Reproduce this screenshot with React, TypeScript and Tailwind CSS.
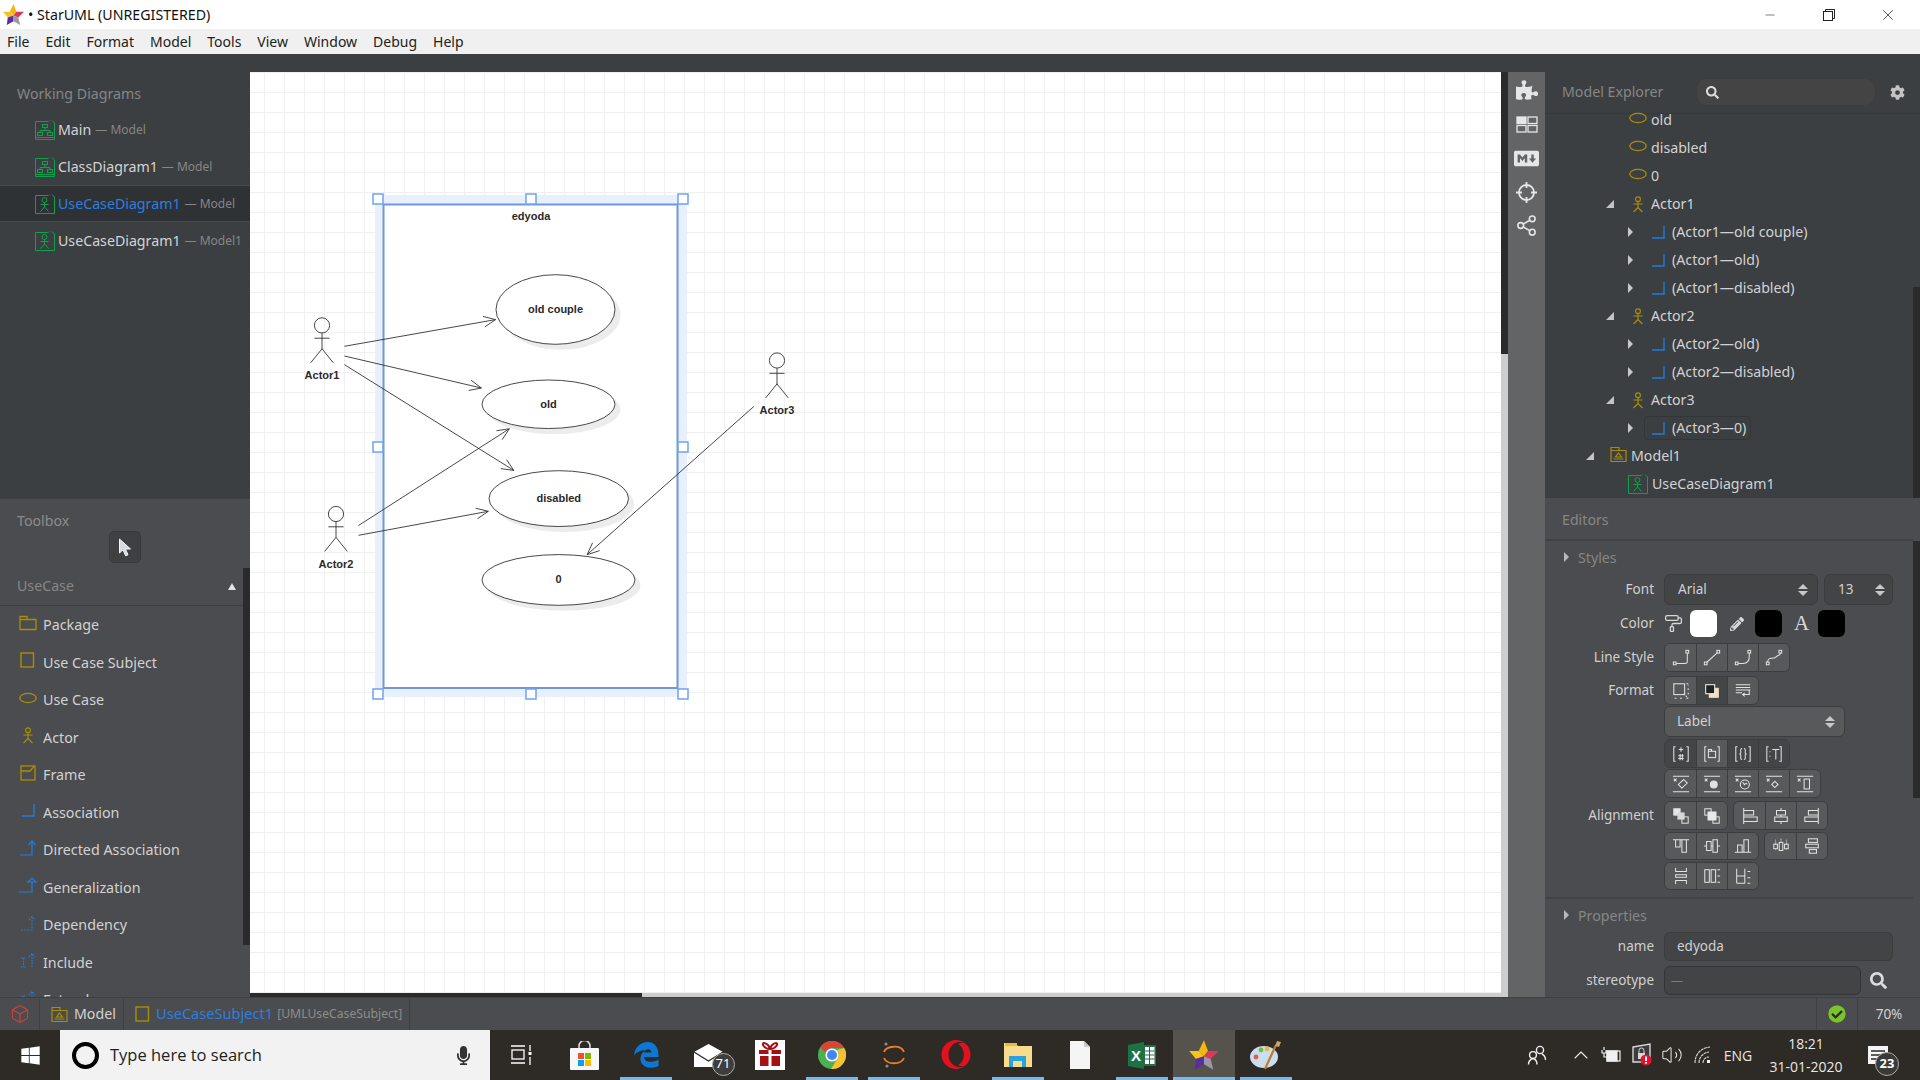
import React from 'react';
import { Box, Share2, Minus, X, ChevronUp, Volume2, PaintRoller } from 'lucide-react';
import { FaPuzzlePiece, FaMarkdown, FaSearch, FaCog, FaPencilAlt, FaWindows, FaOpera, FaMicrophone, FaCheckCircle } from 'react-icons/fa';

const YELLOW = '#a98e05';
const BLUE = '#1f7fdd';
const GREEN = '#0fa04d';

const Star = ({ size = 24 }: { size?: number }) => (
  <svg width={size} height={size} viewBox="0 0 24 24">
    <polygon points="12,1 15,9 12,13 8,9" fill="#f5b60f" />
    <polygon points="1,9 8,9 12,13 6,15" fill="#f7c51a" />
    <polygon points="15,9 23,9 17,15 12,13" fill="#d83a5a" />
    <polygon points="6,15 12,13 12,19 5,23" fill="#5a2ea0" />
    <polygon points="12,13 17,15 19,23 12,19" fill="#9a98a6" />
  </svg>
);

const DiagramIcon = ({ kind }: { kind: 'tree' | 'actor' }) => (
  <svg width="20" height="20" viewBox="0 0 20 20" fill="none" stroke={GREEN} strokeWidth="1">
    <path d="M15 .5h-.5M.5 1.5h13M.5 1.5v18h19V3M17 .5l2.5 2.5" />
    {kind === 'tree' ? (
      <>
        <rect x="7.5" y="4.5" width="5" height="3" />
        <rect x="2.5" y="12.5" width="5" height="3" />
        <rect x="12.5" y="12.5" width="5" height="3" />
        <path d="M10 7.5v3M5 12.5v-2h10v2M1 17.5h18" />
      </>
    ) : (
      <>
        <circle cx="9.5" cy="6" r="2.5" />
        <path d="M9.5 8.5v4.5M5.5 10.5h8M9.5 13l-4 4.5M9.500 13l4 4.5" />
      </>
    )}
  </svg>
);

const PackageIcon = () => (
  <svg width="18" height="16" viewBox="0 0 18 16" fill="none" stroke={YELLOW} strokeWidth="1.3">
    <path d="M1 14.5V1.5h7v3M1 4.500h16v10H1z" />
  </svg>
);
const ModelIcon = () => (
  <svg width="17" height="17" viewBox="0 0 17 17" fill="none" stroke={YELLOW} strokeWidth="1.2">
    <path d="M1 15.500V1.500h8v3M1 4.500h15v11H1z" />
    <path d="M8.500 7l3 4h-6zM3.500 13h10" />
  </svg>
);
const SubjectIcon = () => (
  <svg width="15" height="16" viewBox="0 0 15 16" fill="none" stroke={YELLOW} strokeWidth="1.4">
    <rect x="1" y="1" width="12.5" height="14" />
  </svg>
);
const EllipseIcon = () => (
  <svg width="18" height="12" viewBox="0 0 18 12" fill="none" stroke={YELLOW} strokeWidth="1.3">
    <ellipse cx="9" cy="6" rx="8.2" ry="4.6" />
  </svg>
);
const ActorIcon = () => (
  <svg width="14" height="17" viewBox="0 0 14 17" fill="none" stroke={YELLOW} strokeWidth="1.2">
    <circle cx="7" cy="3.2" r="2.4" />
    <path d="M7 5.500v6M2.500 8h9M7 11.500L2.500 16M7 11.500l4.500 4.500" />
  </svg>
);
const FrameIcon = () => (
  <svg width="16" height="16" viewBox="0 0 16 16" fill="none" stroke={YELLOW} strokeWidth="1.3">
    <rect x="1" y="1" width="14" height="14" />
    <path d="M1 6h9l4-4.500" />
  </svg>
);
const AssocIcon = () => (
  <svg width="14" height="14" viewBox="0 0 14 14" fill="none" stroke={BLUE} strokeWidth="1.3">
    <path d="M1 13h12V1" />
  </svg>
);
const LinkIcon = ({ kind }: { kind: 'directed' | 'gen' | 'dep' | 'include' | 'extend' }) => (
  <svg width="20" height="18" viewBox="0 0 20 18" fill="none" stroke={BLUE} strokeWidth="1.2">
    {kind === 'directed' && <path d="M2 16h12V2M10.500 6L14 2l3.500 4" />}
    {kind === 'gen' && <path d="M1 16h13V6M10 6l4-4 4 4z" />}
    {kind === 'dep' && <path d="M3 16h11V3M11 6l3-3.500L17 6" strokeDasharray="1.6 1.6" />}
    {kind === 'include' && <path d="M3 7h5M3 16h5M5.500 7v9M14 16V3M11 6l3-3.500L17 6" strokeDasharray="1.6 1.2" />}
    {kind === 'extend' && <path d="M3 7h5M3 16h5M5.500 7v9M14 16V3M11 6l3-3.500L17 6" strokeDasharray="1.6 1.2" />}
  </svg>
);

const workingDiagrams = [
  { name: 'Main', owner: 'Model', kind: 'tree' as const },
  { name: 'ClassDiagram1', owner: 'Model', kind: 'tree' as const },
  { name: 'UseCaseDiagram1', owner: 'Model', kind: 'actor' as const, active: true },
  { name: 'UseCaseDiagram1', owner: 'Model1', kind: 'actor' as const },
];

const tools = [
  { label: 'Package', icon: <PackageIcon /> },
  { label: 'Use Case Subject', icon: <SubjectIcon /> },
  { label: 'Use Case', icon: <EllipseIcon /> },
  { label: 'Actor', icon: <ActorIcon /> },
  { label: 'Frame', icon: <FrameIcon /> },
  { label: 'Association', icon: <AssocIcon /> },
  { label: 'Directed Association', icon: <LinkIcon kind="directed" /> },
  { label: 'Generalization', icon: <LinkIcon kind="gen" /> },
  { label: 'Dependency', icon: <LinkIcon kind="dep" /> },
  { label: 'Include', icon: <LinkIcon kind="include" /> },
  { label: 'Extend', icon: <LinkIcon kind="extend" /> },
];

function LeftPanel() {
  return (
    <div className="w-[250px] shrink-0 flex flex-col">
      <div className="h-[444px] bg-[#3b3f42] pt-[26px]">
        <div className="pl-[17px] h-[28px] leading-[28px] text-[14.2px] text-[#868686]">Working Diagrams</div>
        <div className="mt-[3px]">
          {workingDiagrams.map((d, i) => (
            <div
              key={i}
              className={`h-[37px] flex items-center pl-[35px] border-y ${d.active ? 'bg-[#2f3234] border-[#45484b]' : 'border-transparent'}`}
            >
              <DiagramIcon kind={d.kind} />
              <span className={`ml-[3px] text-[14.2px] ${d.active ? 'text-[#2a7fe0]' : 'text-[#d4d4d4]'}`}>{d.name}</span>
              <span className="ml-[4px] text-[12px] text-[#868686]">— {d.owner}</span>
            </div>
          ))}
        </div>
      </div>
      <div className="relative flex-1 min-h-0 overflow-hidden bg-[#4b4c4f] border-t border-[#3d3f41]">
        <div className="pl-[17px] pt-[12px] h-[32px] text-[14.2px] leading-[20px] text-[#8b8b8b]">Toolbox</div>
        <div className="pl-[109px]">
          <div className="w-[32px] h-[32px] rounded-[5px] bg-[#3e4042] border border-[#38393b] flex items-center justify-center">
            <svg width="15" height="19" viewBox="0 0 15 19">
              <path d="M1.500 1v14l3.500-3.200 2.600 6 2.400-1-2.500-5.800h5z" fill="#d6dbe2" stroke="#f2f4f6" strokeWidth="1" />
            </svg>
          </div>
        </div>
        <div className="mt-[4px] h-[39px] mr-[7px] pl-[17px] pr-[7px] flex items-center justify-between border-b border-[#3e3f41] text-[14.2px] text-[#878787]">
          UseCase
          <span className="w-0 h-0 border-x-[4.5px] border-x-transparent border-b-[7px] border-b-[#e2e2e2]" />
        </div>
        {tools.map((t) => (
          <div key={t.label} className="h-[37.5px] flex items-center">
            <span className="w-[43px] shrink-0 flex justify-center pl-[12px] pb-[4px]">{t.icon}</span>
            <span className="text-[14.3px] text-[#d2d2d2]">{t.label}</span>
          </div>
        ))}
        <div className="absolute right-0 top-[69px] w-[7px] h-[377px] bg-[#2b2b2b]" />
      </div>
    </div>
  );
}

const Actor = ({ x, y, label }: { x: number; y: number; label: string }) => (
  <g fill="none" stroke="#333" strokeWidth="0.9">
    <circle cx={x} cy={y} r="7.6" />
    <path d={`M${x} ${y + 7.6}v16M${x - 7.6} ${y + 12.8}h15.2M${x} ${y + 23.4}l-11.3 14M${x} ${y + 23.4}l11.3 14`} />
    <text x={x} y={y + 53.5} textAnchor="middle" stroke="none" fill="#2a2a2a" fontSize="11" fontWeight="700" fontFamily="'Liberation Sans', sans-serif">
      {label}
    </text>
  </g>
);

const UseCase = ({ x0, x1, y0, y1, label }: { x0: number; y0: number; x1: number; y1: number; label: string }) => {
  const cx = (x0 + x1) / 2;
  const cy = (y0 + y1) / 2;
  const rx = (x1 - x0) / 2;
  const ry = (y1 - y0) / 2;
  return (
    <g>
      <ellipse cx={cx + 5.5} cy={cy + 5.5} rx={rx} ry={ry} fill="#ececec" />
      <ellipse cx={cx} cy={cy} rx={rx} ry={ry} fill="#fff" stroke="#333" strokeWidth="0.9" />
      <text x={cx} y={cy + 3.5} textAnchor="middle" fill="#2a2a2a" fontSize="11" fontWeight="700" fontFamily="'Liberation Sans', sans-serif">
        {label}
      </text>
    </g>
  );
};

const Arrow = ({ x1, y1, x2, y2 }: { x1: number; y1: number; x2: number; y2: number }) => {
  const a = Math.atan2(y2 - y1, x2 - x1);
  const len = 13;
  const spread = 0.42;
  const p1 = [x2 - len * Math.cos(a - spread), y2 - len * Math.sin(a - spread)];
  const p2 = [x2 - len * Math.cos(a + spread), y2 - len * Math.sin(a + spread)];
  return (
    <path
      d={`M${x1} ${y1}L${x2} ${y2}M${p1[0]} ${p1[1]}L${x2} ${y2}L${p2[0]} ${p2[1]}`}
      fill="none"
      stroke="#333"
      strokeWidth="0.9"
    />
  );
};

const handles = [
  [378, 199], [531, 199], [683, 199],
  [378, 447], [683, 447],
  [378, 694], [531, 694], [683, 694],
];

function Diagram() {
  return (
    <svg className="absolute inset-0" width="1252" height="921" viewBox="250 72 1252 921">
      <rect x="375" y="195" width="312" height="502" fill="#e8f0fd" />
      <rect x="383.5" y="204.5" width="294" height="483.5" fill="#fff" stroke="#7098d8" strokeWidth="2" />
      <text x="531" y="220" textAnchor="middle" fill="#2a2a2a" fontSize="11" fontWeight="700" fontFamily="'Liberation Sans', sans-serif">
        edyoda
      </text>
      <UseCase x0={496} x1={615} y0={274.7} y1={344.3} label="old couple" />
      <UseCase x0={482} x1={615} y0={380} y1={428.5} label="old" />
      <UseCase x0={489} x1={628.5} y0={470.7} y1={526.5} label="disabled" />
      <UseCase x0={482} x1={635} y0={554.6} y1={605.3} label="0" />
      <Actor x={322} y={325.4} label="Actor1" />
      <Actor x={336} y={514} label="Actor2" />
      <Actor x={777} y={360.5} label="Actor3" />
      <Arrow x1={344.4} y1={346.3} x2={495.6} y2={319.6} />
      <Arrow x1={344.4} y1={356} x2={481.4} y2={388} />
      <Arrow x1={344.4} y1={364.6} x2={513.8} y2={470.4} />
      <Arrow x1={358.5} y1={525.5} x2={509.3} y2={428.8} />
      <Arrow x1={358.5} y1={535.3} x2={488.3} y2={511.3} />
      <Arrow x1={753.8} y1={406.5} x2={587.2} y2={554.6} />
      {handles.map(([x, y]) => (
        <rect key={`${x}-${y}`} x={x - 5} y={y - 5} width="10" height="10" fill="#fff" stroke="#6ea2ee" strokeWidth="1.5" />
      ))}
    </svg>
  );
}

function CanvasArea() {
  return (
    <div className="flex-1 min-w-0 flex flex-col">
      <div className="h-[18px] bg-[#3b3f42]" />
      <div className="flex-1 min-h-0 flex">
        <div className="flex-1 min-w-0 flex flex-col">
          <div className="relative flex-1 min-h-0 overflow-hidden bg-white bg-[linear-gradient(#f0f0f0_1px,transparent_1px),linear-gradient(90deg,#f0f0f0_1px,transparent_1px)] bg-[size:20px_20px] bg-[position:14px_0]">
            <Diagram />
          </div>
          <div className="h-[4px] bg-[#cdcdcd]">
            <div className="h-full w-[392px] bg-[#2b2b2b]" />
          </div>
        </div>
        <div className="w-[7px] bg-[#cdcdcd]">
          <div className="h-[282px] bg-[#2b2b2b]" />
        </div>
        <div className="w-[37px] bg-[#636466] flex flex-col items-center pt-[1px] text-[#e6e6e6]">
          <div className="h-[34px] flex items-center"><FaPuzzlePiece size={22} /></div>
          <div className="h-[34px] flex items-center">
            <svg width="22" height="17" viewBox="0 0 22 17" fill="none" stroke="currentColor" strokeWidth="1.3">
              <rect x="1" y="1" width="9" height="6.5" fill="currentColor" />
              <rect x="12" y="1" width="9" height="6.5" />
              <rect x="1" y="9.5" width="9" height="6.5" />
              <rect x="12" y="9.5" width="9" height="6.5" />
            </svg>
          </div>
          <div className="h-[34px] flex items-center"><FaMarkdown size={25} /></div>
          <div className="h-[34px] flex items-center">
            <svg width="23" height="23" viewBox="0 0 23 23" fill="none" stroke="currentColor" strokeWidth="1.8">
              <circle cx="11.5" cy="11.5" r="7.5" />
              <path d="M11.5 1v6M11.5 16v6M1 11.500h6M16 11.500h6" />
            </svg>
          </div>
          <div className="h-[33px] flex items-center"><Share2 size={23} strokeWidth={1.6} /></div>
        </div>
      </div>
    </div>
  );
}

type TreeRow = {
  label: string;
  kind: 'ellipse' | 'actor' | 'assoc' | 'model' | 'diagram';
  caret?: 'down' | 'right';
  selected?: boolean;
};

const treeRows: TreeRow[] = [
  { label: 'old', kind: 'ellipse' },
  { label: 'disabled', kind: 'ellipse' },
  { label: '0', kind: 'ellipse' },
  { label: 'Actor1', kind: 'actor', caret: 'down' },
  { label: '(Actor1—old couple)', kind: 'assoc', caret: 'right' },
  { label: '(Actor1—old)', kind: 'assoc', caret: 'right' },
  { label: '(Actor1—disabled)', kind: 'assoc', caret: 'right' },
  { label: 'Actor2', kind: 'actor', caret: 'down' },
  { label: '(Actor2—old)', kind: 'assoc', caret: 'right' },
  { label: '(Actor2—disabled)', kind: 'assoc', caret: 'right' },
  { label: 'Actor3', kind: 'actor', caret: 'down' },
  { label: '(Actor3—0)', kind: 'assoc', caret: 'right', selected: true },
  { label: 'Model1', kind: 'model', caret: 'down' },
  { label: 'UseCaseDiagram1', kind: 'diagram' },
];

const DownCaret = () => (
  <svg width="8" height="8" viewBox="0 0 8 8"><polygon points="8,0 8,8 0,8" fill="#c4c4c4" /></svg>
);
const RightCaret = () => (
  <span className="w-0 h-0 border-y-[5px] border-y-transparent border-l-[5px] border-l-[#c8c8c8]" />
);

function Explorer() {
  return (
    <div className="relative h-[444px] bg-[#3b3f42] overflow-hidden">
      <div className="h-[60px] flex items-center border-b border-[#36393b] pl-[17px] pt-[17px]">
        <span className="w-[134px] text-[14.2px] text-[#868686]">Model Explorer</span>
        <div className="w-[180px] h-[28px] rounded-[11px] bg-[#434443] border border-[#3c3e3e] flex items-center pl-[9px] text-[#dcdcdc]">
          <FaSearch size={13} />
        </div>
        <FaCog size={15} className="ml-[14px] text-[#c4c4c4]" />
      </div>
      <div className="mt-[-8px]">
        {treeRows.map((r, i) => {
          const left =
            r.kind === 'assoc' ? 1651 : r.kind === 'model' ? 1610 : r.kind === 'diagram' ? 1628 : 1629;
          const caretLeft = r.kind === 'assoc' ? 1628 : r.kind === 'model' ? 1586 : 1606;
          return (
            <div key={i} className="h-[28px] flex items-center text-[14.2px] text-[#d2d2d2]">
              <span className="shrink-0 flex items-center" style={{ marginLeft: caretLeft - 1545, width: left - caretLeft }}>
                {r.caret === 'down' && <DownCaret />}
                {r.caret === 'right' && <RightCaret />}
              </span>
              {r.kind === 'ellipse' && <span className="w-[22px] shrink-0 pb-[5px]"><EllipseIcon /></span>}
              {r.kind === 'actor' && <span className="w-[22px] shrink-0 pl-[2px]"><ActorIcon /></span>}
              {r.kind === 'model' && <span className="w-[21px] shrink-0 pb-[3px]"><ModelIcon /></span>}
              {r.kind === 'diagram' && <span className="w-[24px] shrink-0"><DiagramIcon kind="actor" /></span>}
              {r.kind === 'assoc' && (
                <span className={`flex items-center h-[24px] pr-[4px] rounded-[4px] border ${r.selected ? 'border-[#333638]' : 'border-transparent'} ml-[-7px] pl-[6px]`}>
                  <span className="w-[21px] shrink-0"><AssocIcon /></span>
                  {r.label}
                </span>
              )}
              {r.kind !== 'assoc' && r.label}
            </div>
          );
        })}
      </div>
      <div className="absolute right-0 top-[233px] bottom-0 w-[7px] bg-[#2b2b2b]" />
    </div>
  );
}

const I = ({ children }: { children: React.ReactNode }) => (
  <svg width="18" height="18" viewBox="0 0 20 20" fill="none" stroke="#e2e2e2" strokeWidth="1.15">
    {children}
  </svg>
);

const squares = (a: [number, number], b: [number, number]) => (
  <>
    <rect x={a[0] - 1.5} y={a[1] - 1.5} width="3" height="3" />
    <rect x={b[0] - 1.5} y={b[1] - 1.5} width="3" height="3" />
  </>
);

const x = 'M2 4l3 3M5 4L2 7';

const lineIcons = [
  <I>{squares([3, 16], [17, 3])}<path d="M4.500 16h10q2.500 0 2.500-2V4.500" /></I>,
  <I>{squares([3, 16], [17, 3])}<path d="M4 15L16 4" /></I>,
  <I>{squares([3, 16], [17, 3])}<path d="M4.500 16H10q7 0 7-8V4.500" /></I>,
  <I>{squares([3, 16], [17, 3])}<path d="M3 14.500C3 8 9 12 12 9s5-1 5-4.500" /></I>,
];
const formatIcons = [
  <I><rect x="2" y="2" width="12" height="12" /><path d="M16 2h2v2M18 7v2M18 12v2M18 18h-3M11 18H9M5 18H2M13 13l5 5" strokeDasharray="2 1" /></I>,
  <I><rect x="7" y="7" width="10" height="10" fill="#f1dfbe" stroke="#f1dfbe" /><rect x="3" y="3" width="10" height="10" fill="#222" stroke="#f2f2f2" /></I>,
  <I><path d="M2 3h16M2 6h16M2 9h16M2 12h7M17 9v5h-7M12 12l-2.500 2 2.500 2" /></I>,
];
const labelIcons = [
  <I><path d="M4 2H2v16h2M16 2h2v16h-2M10 2.500v5M7.500 5h5M7 12h6M7 15h6M9 10v7M11.500 10v7" /></I>,
  <I><path d="M4 2H2v16h2M16 2h2v16h-2" /><rect x="6" y="7" width="8" height="7" /><path d="M6 7V5h3.500v2" /></I>,
  <I><path d="M4 2H2v16h2M16 2h2v16h-2M9 4Q7 4 7.500 7T6 10q2 0 1.500 3T9 16M11 4q2 0 1.500 3t1.500 3q-2 0-1.500 3T11 16" /></I>,
  <I><path d="M4 2H2v16h2M16 2h2v16h-2M8 5h8M12 5v11M5.500 7v1M5.500 12v1" /></I>,
];
const attrIcons = [
  <I><path d={`M1 1.500h18M1 18.500h18${x}M13 5l4 4-6 5.500-4-4z`} /></I>,
  <I><path d={`M1 1.500h18M1 18.500h18${x}`} /><circle cx="12" cy="10.500" r="3.800" fill="#e2e2e2" /></I>,
  <I><path d={`M1 1.500h18M1 18.500h18${x}`} /><circle cx="12" cy="10.500" r="5" /><path d="M9.500 9c1.500-2 1.500 3 2.500 1.500s2-2 2.500 0" /></I>,
  <I><path d={`M1 1.500h18M1 18.500h18${x}`} /><path d="M11 7l3.500 3.500L11 14l-3.500-3.500z" /></I>,
  <I><path d={`M1 1.500h18M1 18.500h18${x}`} /><rect x="9" y="4.500" width="6" height="11" /></I>,
];
const stackIcons = [
  <I><rect x="2" y="2" width="7" height="7" fill="#e8e8e8" /><rect x="11" y="11" width="7" height="7" /><rect x="6" y="6" width="8" height="8" fill="#d8d8d8" stroke="none" /></I>,
  <I><rect x="2" y="2" width="7" height="7" /><rect x="11" y="11" width="7" height="7" /><rect x="5" y="5" width="10" height="10" fill="#e8e8e8" stroke="none" /></I>,
];
const alignH = [
  <I><path d="M3 1v18M3 4h11v5H3M3 11h15v5H3" fill="none" /></I>,
  <I><path d="M10 1v3M10 9v2M10 16v3M5 4h10v5H5zM3 11h14v5H3z" /></I>,
  <I><path d="M17 1v18M17 4H6v5h11M17 11H2v5h15" /></I>,
];
const alignV = [
  <I><path d="M1 3h18M4 3v8h5V3M11 3v14h5V3" /></I>,
  <I><path d="M1 10h3M9 10h2M16 10h3M4 5h5v10H4zM11 3h5v14h-5z" /></I>,
  <I><path d="M1 17h18M4 17V9h5v8M11 17V3h5v14" /></I>,
];
const spreadIcons = [
  <I><rect x="2" y="8" width="4" height="5" /><rect x="8" y="6" width="4" height="9" /><rect x="14" y="8" width="4" height="5" /><path d="M4 3v5M10 2v4M16 3v5M4 13v2M16 13v2" strokeDasharray="1 1" /></I>,
  <I><rect x="6" y="2" width="10" height="4" /><rect x="3" y="8" width="14" height="4" /><rect x="7" y="14" width="8" height="4" /></I>,
];
const sizeIcons = [
  <I><path d="M4 1v4h12V1M4 19v-4h12v4M4 8.500h12v3H4z" /></I>,
  <I><rect x="2" y="3" width="5" height="14" /><rect x="9" y="3" width="5" height="14" /><path d="M16 3h3M16 10h3M16 17h3" /></I>,
  <I><path d="M3 2v16M3 10h9M12 2v16M3 18h9M15 5h3M15 12h3M15 18h3" /></I>,
];

const Group = ({ icons, active = [], className = '' }: { icons: React.ReactNode[]; active?: number[]; className?: string }) => (
  <div className={`flex h-full rounded-[6px] overflow-hidden border border-[#3c3d3e] ${className}`}>
    {icons.map((ic, i) => (
      <div
        key={i}
        className={`w-[31px] flex items-center justify-center ${i > 0 ? 'border-l border-[#3c3d3e]' : ''} ${active.includes(i) ? 'bg-[#444547]' : 'bg-[#58595b]'}`}
      >
        {ic}
      </div>
    ))}
  </div>
);

const Field = ({ label, className, children }: { label?: string; className: string; children: React.ReactNode }) => (
  <div className={`flex items-center ${className}`}>
    <span className="w-[109px] mr-[10px] text-right text-[13.5px] text-[#d0d0d0] shrink-0">{label}</span>
    {children}
  </div>
);

const Updown = () => (
  <span className="flex flex-col gap-[2px] shrink-0">
    <span className="w-0 h-0 border-x-[5px] border-x-transparent border-b-[5px] border-b-[#c8c8c8]" />
    <span className="w-0 h-0 border-x-[5px] border-x-transparent border-t-[5px] border-t-[#c8c8c8]" />
  </span>
);

const SectionHead = ({ label }: { label: string }) => (
  <div className="flex items-center pl-[19px] text-[14.2px] text-[#868686]">
    <span className="w-0 h-0 border-y-[5px] border-y-transparent border-l-[5px] border-l-[#b8b8b8] mr-[9px]" />
    {label}
  </div>
);

function Editors() {
  return (
    <div className="relative flex-1 min-h-0 bg-[#4b4c4f] overflow-hidden">
      <div className="h-[43px] pl-[17px] pt-[11px] border-b-2 border-[#414244] mr-[7px] text-[14.2px] text-[#868686]">Editors</div>
      <div className="h-[33px] flex items-center"><SectionHead label="Styles" /></div>
      <Field label="Font" className="h-[31px]">
        <div className="w-[154px] h-full rounded-[6px] bg-[#434446] border border-[#3a3b3c] flex items-center justify-between pl-[13px] pr-[9px] text-[13.5px] text-[#d0d0d0]">
          Arial <Updown />
        </div>
        <div className="ml-[6px] w-[69px] h-full rounded-[6px] bg-[#434446] border border-[#3a3b3c] flex items-center justify-between pl-[13px] pr-[7px] text-[13.5px] text-[#d0d0d0]">
          13 <Updown />
        </div>
      </Field>
      <Field label="Color" className="h-[27px] mt-[5px]">
        <PaintRoller size={19} strokeWidth={1.6} className="text-[#d8d8d8]" />
        <span className="ml-[7px] w-[27px] h-[27px] rounded-[6px] bg-white" />
        <FaPencilAlt size={14} className="text-[#d8d8d8] ml-[13px]" />
        <span className="ml-[11px] w-[27px] h-[27px] rounded-[6px] bg-black" />
        <span className="ml-[12px] w-[16px] text-[21px] leading-none text-[#d8d8d8] font-['Liberation_Serif',serif]">A</span>
        <span className="ml-[8px] w-[27px] h-[27px] rounded-[6px] bg-black" />
      </Field>
      <Field label="Line Style" className="h-[29px] mt-[6px]"><Group icons={lineIcons} /></Field>
      <Field label="Format" className="h-[29px] mt-[4px]"><Group icons={formatIcons} active={[1]} /></Field>
      <Field className="h-[31px] mt-[1px]">
        <div className="w-[181px] h-full rounded-[6px] bg-[#58595b] border border-[#3c3d3e] flex items-center justify-between pl-[12px] pr-[9px] text-[13.5px] text-[#d0d0d0]">
          Label <Updown />
        </div>
      </Field>
      <Field className="h-[29px] mt-[2px]"><Group icons={labelIcons} active={[0, 2, 3]} /></Field>
      <Field className="h-[29px] mt-[1px]"><Group icons={attrIcons} /></Field>
      <Field label="Alignment" className="h-[29px] mt-[3px]">
        <Group icons={stackIcons} />
        <Group icons={alignH} className="ml-[5px]" />
      </Field>
      <Field className="h-[28px] mt-[2px]">
        <Group icons={alignV} />
        <Group icons={spreadIcons} className="ml-[5px]" />
      </Field>
      <Field className="h-[28px] mt-[2px]"><Group icons={sizeIcons} /></Field>
      <div className="mt-[7px] mr-[7px] h-[2px] bg-[#414244]" />
      <div className="h-[33px] flex items-center"><SectionHead label="Properties" /></div>
      <Field label="name" className="h-[29px]">
        <div className="w-[229px] h-full rounded-[6px] bg-[#434446] border border-[#3a3b3c] flex items-center pl-[12px] text-[13.5px] text-[#d0d0d0]">edyoda</div>
      </Field>
      <Field label="stereotype" className="h-[29px] mt-[5px]">
        <div className="w-[197px] h-full rounded-[6px] bg-[#434446] border border-[#333436] flex items-center pl-[6px] text-[12px] text-[#7c7c7c]">—</div>
        <FaSearch size={17} className="ml-[9px] text-[#dcdcdc]" />
      </Field>
      <div className="absolute right-0 top-[43px] w-[7px] h-[257px] bg-[#2b2b2b]" />
    </div>
  );
}

function StatusBar() {
  return (
    <div className="h-[33px] shrink-0 bg-[#4b4c4f] border-t border-[#3f4042] flex items-stretch text-[14.2px] text-[#d2d2d2]">
      <div className="w-[40px] flex items-center justify-center border-r border-[#3f4042]">
        <Box size={20} strokeWidth={1.4} className="text-[#c9423a]" />
      </div>
      <div className="w-[84px] flex items-center pl-[11px] border-r border-[#3f4042]">
        <ModelIcon />
        <span className="ml-[6px]">Model</span>
      </div>
      <div className="w-[286px] flex items-center pl-[11px] border-r border-[#3f4042]">
        <SubjectIcon />
        <span className="ml-[6px] text-[14.6px] text-[#2a7fe0]">UseCaseSubject1</span>
        <span className="ml-[4px] text-[12.2px] text-[#8d8d8d]">[UMLUseCaseSubject]</span>
      </div>
      <div className="ml-auto w-[41px] flex items-center justify-center border-l border-[#3f4042]">
        <span className="flex bg-[#2d2d2d] rounded-full"><FaCheckCircle size={18} className="text-[#7cc22e]" /></span>
      </div>
      <div className="w-[63px] flex items-center justify-center border-l border-[#3f4042] text-[13.5px]">70%</div>
    </div>
  );
}

const tiles: { key: string; active?: boolean; current?: boolean; icon: React.ReactNode }[] = [
  {
    key: 'tasks',
    icon: (
      <svg width="22" height="20" viewBox="0 0 22 20" fill="none" stroke="#fff" strokeWidth="1.3">
        <rect x="1" y="5" width="12" height="9" />
        <path d="M0 1h14M0 18h14M19 0v6M19 12v8" />
        <rect x="17.5" y="7" width="3" height="3" fill="#fff" stroke="none" />
      </svg>
    ),
  },
  {
    key: 'store',
    icon: (
      <svg width="29" height="29" viewBox="0 0 29 29">
        <path d="M9 8V5a5 5 0 0 1 11 0v3" fill="none" stroke="#d8d8d8" strokeWidth="1.6" />
        <rect x="0" y="7" width="29" height="22" rx="1" fill="#f7f7f7" />
        <rect x="8" y="12" width="6" height="6" fill="#f25022" />
        <rect x="15" y="12" width="6" height="6" fill="#7fba00" />
        <rect x="8" y="19" width="6" height="6" fill="#00a4ef" />
        <rect x="15" y="19" width="6" height="6" fill="#ffb900" />
      </svg>
    ),
  },
  {
    key: 'edge',
    active: true,
    icon: (
      <svg width="25" height="26" viewBox="0 0 25 26">
        <path
          fillRule="evenodd"
          d="M0 13C1 5 7 0 13.500 0 20.500 0 25 5 24.500 15H10c.5 6 9 6 14.500 2.500v6.500c-8 4-19 1.500-18-8.500.3-3 2.300-6 5.500-7.500C8 8 3 9.500 0 13zM10 10.500h7.500C17.500 6 11 6 10 10.500z"
          fill="#0a78d4"
        />
      </svg>
    ),
  },
  {
    key: 'mail',
    icon: (
      <span className="relative flex">
        <svg width="29" height="23" viewBox="0 0 29 23">
          <path d="M0 8L14.500 0 29 8v15H0z" fill="#fff" />
          <path d="M0 8l14.500 9L29 8" fill="none" stroke="#2e2a25" strokeWidth="1.3" />
        </svg>
        <span className="absolute right-[-12px] bottom-[-9px] w-[23px] h-[23px] rounded-full bg-[#3e3e3c] border border-[#aaa] text-white text-[13px] flex items-center justify-center">71</span>
      </span>
    ),
  },
  {
    key: 'gift',
    icon: (
      <svg width="30" height="30" viewBox="0 0 30 30">
        <rect width="30" height="30" fill="#fff" />
        <path d="M15 9C9 9 6 3 9 3s6 4 6 6c0-2 3-6 6-6s0 6-6 6z" fill="none" stroke="#a50f15" strokeWidth="2" />
        <rect x="4" y="10" width="22" height="4" fill="#a50f15" />
        <rect x="5" y="16" width="20" height="10" fill="#a50f15" />
        <rect x="13.5" y="10" width="3" height="16" fill="#fff" />
      </svg>
    ),
  },
  {
    key: 'chrome',
    active: true,
    icon: (
      <svg width="28" height="28" viewBox="0 0 28 28">
        <circle cx="14" cy="14" r="14" fill="#4caf50" />
        <path d="M14 0a14 14 0 0 1 12.100 7H14a7 7 0 0 0-6.500 4.500L2.300 6.200A14 14 0 0 1 14 0z" fill="#db4437" />
        <path d="M26.100 7A14 14 0 0 1 13 28l6.200-10A7 7 0 0 0 19 9z" fill="#fbc02d" />
        <circle cx="14" cy="14" r="6.600" fill="#fff" />
        <circle cx="14" cy="14" r="5" fill="#4285f4" />
      </svg>
    ),
  },
  {
    key: 'orbit',
    active: true,
    icon: (
      <svg width="24" height="28" viewBox="0 0 24 28" fill="none" stroke="#f07d23" strokeWidth="1.8">
        <path d="M2 11C4 5 19 3 22 11M2 17c3 7 17 7 20 0" />
        <circle cx="4" cy="3" r="1.6" fill="#8a8a8a" stroke="none" />
        <circle cx="5" cy="25" r="1.6" fill="#8a8a8a" stroke="none" />
      </svg>
    ),
  },
  { key: 'opera', icon: <FaOpera size={30} className="text-[#e3101f]" /> },
  {
    key: 'files',
    active: true,
    icon: (
      <svg width="28" height="24" viewBox="0 0 28 24">
        <path d="M0 0h11l3 3h14v21H0z" fill="#f8dc8b" />
        <rect x="1" y="0" width="12" height="3" fill="#e8b93e" />
        <path d="M5 24V13h17v11h-4v-6h-9v6z" fill="#2aa2e0" />
      </svg>
    ),
  },
  {
    key: 'doc',
    icon: (
      <svg width="22" height="28" viewBox="0 0 22 28">
        <path d="M1 0h14l6 6v22H1z" fill="#f5f5f5" />
        <path d="M15 0v6h6z" fill="#c9c9c9" />
      </svg>
    ),
  },
  {
    key: 'excel',
    active: true,
    icon: (
      <svg width="28" height="27" viewBox="0 0 28 27">
        <path d="M0 3l16-3v27L0 24z" fill="#1e7145" />
        <rect x="16" y="3" width="12" height="21" fill="#1e7145" />
        <rect x="17" y="5" width="9.500" height="17" fill="#fff" />
        <path d="M17 9h9.500M17 13h9.500M17 17h9.500M21.500 5v17" stroke="#1e7145" strokeWidth="1" />
        <text x="8" y="19" textAnchor="middle" fill="#fff" fontSize="15" fontWeight="700" fontFamily="'Liberation Sans', sans-serif">X</text>
      </svg>
    ),
  },
  { key: 'star', active: true, current: true, icon: <Star size={32} /> },
  {
    key: 'paint',
    active: true,
    icon: (
      <svg width="32" height="30" viewBox="0 0 32 30">
        <ellipse cx="14" cy="17" rx="14" ry="11" fill="#c9dfef" />
        <circle cx="6" cy="17" r="2.400" fill="#e25c4a" />
        <circle cx="11" cy="10" r="2.400" fill="#7ab648" />
        <circle cx="17" cy="9" r="2.400" fill="#e9b83c" />
        <path d="M15 29L26 5" stroke="#c07a2c" strokeWidth="2.200" />
        <path d="M25 6l2-5 4 1-2 5z" fill="#c7a26a" />
      </svg>
    ),
  },
];

function Taskbar() {
  return (
    <div className="h-[50px] shrink-0 bg-[#2e2a25] flex items-stretch">
      <div className="w-[60px] flex items-center justify-center text-white"><FaWindows size={21} /></div>
      <div className="w-[430px] bg-[#f2f2f2] flex items-center pl-[12px] pr-[17px] text-[#222]">
        <span className="w-[27px] h-[27px] rounded-full border-[4px] border-black" />
        <span className="ml-[11px] text-[16.5px] font-['Open_Sans',sans-serif]">Type here to search</span>
        <FaMicrophone size={19} className="ml-auto text-[#333]" />
      </div>
      <div className="w-[1px]" />
      {tiles.map((t) => (
        <div key={t.key} className={`relative w-[62px] flex items-center justify-center ${t.current ? 'bg-[#56524c]' : ''}`}>
          {t.icon}
          {t.active && <span className={`absolute bottom-0 h-[3px] bg-[#76b9ed] ${t.current ? 'inset-x-0' : 'inset-x-[5px]'}`} />}
        </div>
      ))}
      <div className="ml-auto w-[398px] flex items-center text-[#e8e8e8]">
        <span className="w-[30px] flex justify-center">
          <svg width="20" height="20" viewBox="0 0 20 20" fill="none" stroke="#f0f0f0" strokeWidth="1.4">
            <circle cx="13" cy="5" r="3.600" />
            <circle cx="6" cy="10" r="3.400" />
            <path d="M15 9c2 1 3.500 3 3.500 6M1.500 19.500c0-3 1.500-5 4.500-6 2.500.6 4 3 4 6" />
          </svg>
        </span>
        <span className="ml-[14px] w-[30px] flex justify-center"><ChevronUp size={24} strokeWidth={1.1} /></span>
        <span className="w-[30px] flex justify-center">
          <svg width="20" height="16" viewBox="0 0 20 16" fill="none" stroke="#f0f0f0" strokeWidth="1.2">
            <rect x="6" y="4" width="13" height="10" />
            <rect x="6" y="4" width="10" height="10" fill="#f0f0f0" />
            <path d="M3 0v3M1 3v3h4V3M3 6v4h3" />
          </svg>
        </span>
        <span className="ml-[1px] w-[30px] flex justify-center">
          <svg width="22" height="24" viewBox="0 0 22 24">
            <path d="M2 4l17-3v18H2z" fill="#3d3d3b" stroke="#d8d8d8" strokeWidth="1.4" />
            <rect x="7" y="10" width="7" height="6" fill="#d8d8d8" />
            <path d="M8 10V7.500a2.500 2.500 0 0 1 5 0V10" fill="none" stroke="#d8d8d8" />
            <circle cx="15" cy="17" r="5.500" fill="#e8112d" />
            <rect x="14" y="13.500" width="2" height="4.500" fill="#fff" />
            <rect x="14" y="19" width="2" height="1.600" fill="#fff" />
          </svg>
        </span>
        <span className="w-[30px] flex justify-center"><Volume2 size={22} strokeWidth={1.1} /></span>
        <span className="ml-[1px] w-[30px] flex justify-center">
          <svg width="18" height="18" viewBox="0 0 18 18" fill="none" stroke="#d8d8d8" strokeWidth="1.1">
            <path d="M1 17C1 8 7 2 16 1M5 17c0-6 4-10 10-11M9 17c0-3 2-6 6-6" strokeDasharray="3 .6" />
            <rect x="13" y="14" width="3" height="3" fill="#f0f0f0" stroke="none" />
          </svg>
        </span>
        <span className="w-[40px] text-center text-[14px] font-['Open_Sans',sans-serif]">ENG</span>
        <div className="w-[96px] text-center text-[14px] leading-[23px] font-['Open_Sans',sans-serif]">
          <div>18:21</div>
          <div>31-01-2020</div>
        </div>
        <span className="relative ml-[14px] flex">
          <svg width="20" height="18" viewBox="0 0 20 18">
            <rect width="20" height="18" fill="#f5f5f5" />
            <path d="M3 5h14M3 9h14M3 13h9" stroke="#2e2a25" strokeWidth="1.400" />
          </svg>
          <span className="absolute left-[7px] top-[6px] w-[24px] h-[24px] rounded-full bg-[#3a3a38] border border-[#aaa] text-white text-[13px] font-bold flex items-center justify-center">23</span>
        </span>
      </div>
    </div>
  );
}

export default function App() {
  return (
    <div className="w-[1920px] h-[1080px] flex flex-col overflow-hidden font-['Noto_Sans',sans-serif]">
      <div className="h-[29px] shrink-0 bg-white flex items-center text-[#111]">
        <span className="ml-[2px]"><Star size={23} /></span>
        <span className="ml-[3px] text-[14.2px]">• StarUML (UNREGISTERED)</span>
        <div className="ml-auto flex items-center text-[#222]">
          <span className="w-[58px] flex justify-center"><Minus size={14} strokeWidth={1} /></span>
          <span className="w-[59px] flex justify-center">
            <svg width="12" height="12" viewBox="0 0 12 12" fill="none" stroke="#222">
              <rect x=".5" y="2.5" width="9" height="9" />
              <path d="M2.500 2.500v-2h9v9h-2" />
            </svg>
          </span>
          <span className="w-[59px] flex justify-center mr-[3px]"><X size={18} strokeWidth={1} /></span>
        </div>
      </div>
      <div className="h-[25px] shrink-0 bg-[#f0f0f0] flex items-center pl-[7px] gap-[16px] text-[14px] text-[#222]">
        {['File', 'Edit', 'Format', 'Model', 'Tools', 'View', 'Window', 'Debug', 'Help'].map((m) => (
          <span key={m}>{m}</span>
        ))}
      </div>
      <div className="flex-1 min-h-0 flex">
        <LeftPanel />
        <CanvasArea />
        <div className="w-[375px] shrink-0 flex flex-col">
          <Explorer />
          <Editors />
        </div>
      </div>
      <StatusBar />
      <Taskbar />
    </div>
  );
}
